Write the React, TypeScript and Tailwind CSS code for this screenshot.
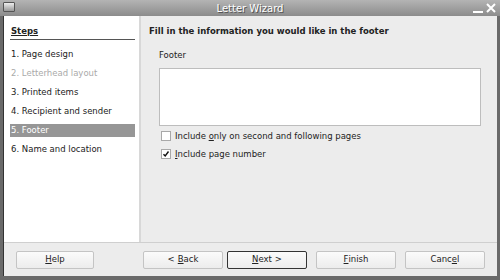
import React from "react";
import type { FC, ReactNode } from "react";

const steps = [
  { label: "1. Page design" },
  { label: "2. Letterhead layout", disabled: true },
  { label: "3. Printed items" },
  { label: "4. Recipient and sender" },
  { label: "5. Footer", active: true },
  { label: "6. Name and location" },
];

const Btn: FC<{ children: ReactNode; main?: boolean }> = ({ children, main }) => (
  <div
    className={
      "flex h-[18px] w-[80px] items-center justify-center rounded-[2px] border bg-gradient-to-b from-[#fbfbfb] to-[#ececec] text-[8.5px] text-[#222] " +
      (main ? "border-[#333]" : "border-[#c4c4c4]")
    }
  >
    {children}
  </div>
);

const Check: FC<{ checked?: boolean }> = ({ checked }) => (
  <div className="flex h-[10px] w-[10px] items-center justify-center border border-[#a8a8a8] bg-white">
    {checked && (
      <svg width="8" height="8" viewBox="0 0 8 8">
        <path d="M1.5 4.2 L3.2 6 L6.5 1.5" stroke="#111" strokeWidth="1.4" fill="none" />
      </svg>
    )}
  </div>
);

const App: FC = () => {
  return (
    <div className="flex h-[280px] w-[500px] flex-col bg-[#6a6a6a] font-['DejaVu_Sans',sans-serif]">
      {/* title bar */}
      <div className="relative flex h-[16px] items-center justify-center bg-gradient-to-b from-[#b4b4b4] to-[#8c8c8c]">
        <div className="absolute left-[3px] top-[2px] h-[10px] w-[12px] rounded-[1px] border border-[#555] bg-gradient-to-b from-[#eee] to-[#999]" />
        <span className="text-[10px] text-white [text-shadow:1px_1px_0_#555]">Letter Wizard</span>
        <div className="absolute right-[4px] top-[3px] flex items-center gap-[3px]">
          <div className="h-[10px] w-[10px] border-b-2 border-white" />
          <svg width="10" height="10" viewBox="0 0 10 10">
            <path d="M1 1 L9 9 M9 1 L1 9" stroke="white" strokeWidth="2" />
          </svg>
        </div>
      </div>

      <div className="mx-[3px] mb-[4px] flex flex-1 flex-col border-l border-[#333] bg-[#ececec]">
        <div className="flex flex-1">
          {/* steps */}
          <div className="w-[137px] border-r-2 border-[#d8d8d8] bg-white pl-[6px] pr-[4px] pt-[9px]">
            <div className="border-b border-[#555] pb-[1px] pl-[1px] text-[8.5px] font-bold text-[#222] underline underline-offset-1">
              Steps
            </div>
            <div className="mt-[8px] flex flex-col gap-[6px]">
              {steps.map((s) => (
                <div
                  key={s.label}
                  className={
                    "flex h-[13px] items-center pl-[1px] text-[8.5px] " +
                    (s.active
                      ? "bg-[#969696] text-white"
                      : s.disabled
                        ? "text-[#aaa]"
                        : "text-[#222]")
                  }
                >
                  {s.label}
                </div>
              ))}
            </div>
          </div>

          {/* content */}
          <div className="flex-1 pl-[8px] pr-[16px] pt-[9px]">
            <div className="text-[8.5px] font-bold leading-[12px] text-[#222]">
              Fill in the information you would like in the footer
            </div>
            <div className="mt-[12px] pl-[10px]">
              <div className="text-[8.5px] text-[#222]">Footer</div>
              <div className="mt-[6px] h-[58px] border border-[#bdbdbd] bg-white" />
              <div className="mt-[4px] flex flex-col gap-[5px] pl-[2px]">
                <div className="flex items-center gap-[4px] text-[8.5px] text-[#222]">
                  <Check />
                  <span>
                    Include <span className="underline">o</span>nly on second and following pages
                  </span>
                </div>
                <div className="flex items-center gap-[4px] text-[8.5px] text-[#222]">
                  <Check checked />
                  <span>
                    <span className="underline">I</span>nclude page number
                  </span>
                </div>
              </div>
            </div>
          </div>
        </div>

        {/* buttons */}
        <div className="flex h-[34px] items-center border-t border-[#cfcfcf] px-[12px]">
          <Btn>
            <span className="underline">H</span>elp
          </Btn>
          <div className="ml-[49px] flex gap-[4px]">
            <Btn>
              <span className="mr-[3px]">&lt;</span>
              <span className="underline">B</span>ack
            </Btn>
            <Btn main>
              <span className="underline">N</span>
              <span className="mr-[3px]">ext</span>&gt;
            </Btn>
            <div className="ml-[5px] flex gap-[9px]">
              <Btn>
                <span className="underline">F</span>inish
              </Btn>
              <Btn>
                Canc<span className="underline">e</span>l
              </Btn>
            </div>
          </div>
        </div>
      </div>
    </div>
  );
};

export default App;
